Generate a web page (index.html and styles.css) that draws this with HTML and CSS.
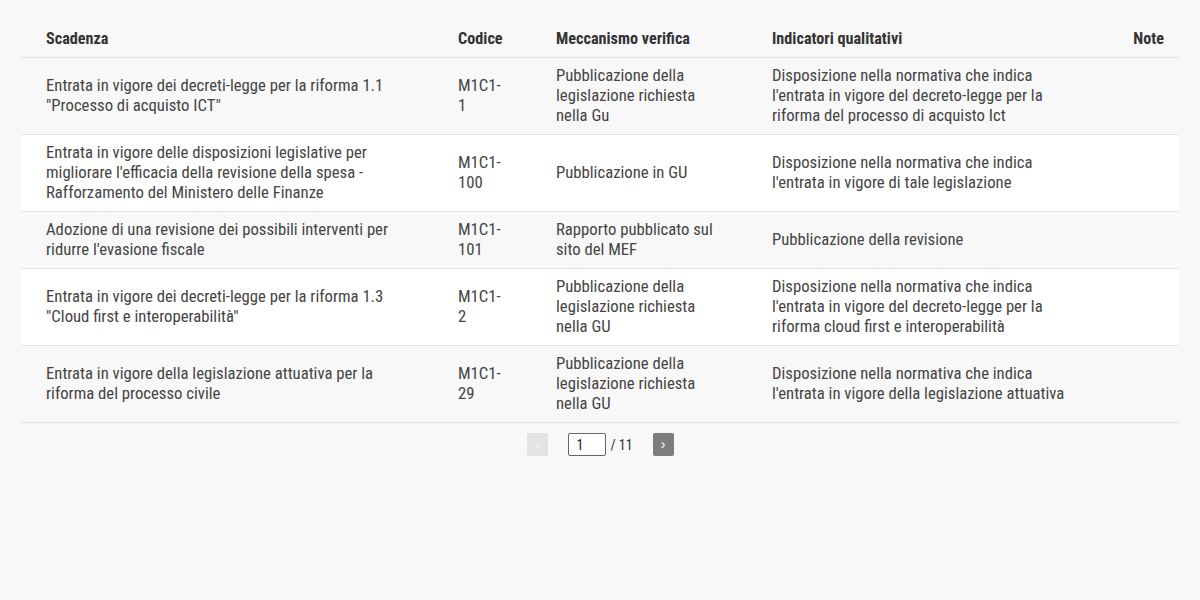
FILE: index.html
```html
<!DOCTYPE html>
<html lang="it">
<head>
<meta charset="utf-8">
<title>Scadenze</title>
<link rel="stylesheet" href="styles.css">
</head>
<body>
<div class="wrap">
  <table class="grid">
    <colgroup>
      <col class="c1"><col class="c2"><col class="c3"><col class="c4"><col class="c5">
    </colgroup>
    <thead>
      <tr>
        <th>Scadenza</th>
        <th>Codice</th>
        <th>Meccanismo verifica</th>
        <th>Indicatori qualitativi</th>
        <th class="note">Note</th>
      </tr>
    </thead>
    <tbody>
      <tr class="odd">
        <td>Entrata in vigore dei decreti-legge per la riforma 1.1 "Processo di acquisto ICT"</td>
        <td>M1C1-1</td>
        <td>Pubblicazione della legislazione richiesta nella Gu</td>
        <td>Disposizione nella normativa che indica l'entrata in vigore del decreto-legge per la riforma del processo di acquisto Ict</td>
        <td class="note"></td>
      </tr>
      <tr>
        <td>Entrata in vigore delle disposizioni legislative per migliorare l'efficacia della revisione della spesa - Rafforzamento del Ministero delle Finanze</td>
        <td>M1C1-100</td>
        <td>Pubblicazione in GU</td>
        <td>Disposizione nella normativa che indica l'entrata in vigore di tale legislazione</td>
        <td class="note"></td>
      </tr>
      <tr class="odd">
        <td>Adozione di una revisione dei possibili interventi per ridurre l'evasione fiscale</td>
        <td>M1C1-101</td>
        <td>Rapporto pubblicato sul sito del MEF</td>
        <td>Pubblicazione della revisione</td>
        <td class="note"></td>
      </tr>
      <tr>
        <td>Entrata in vigore dei decreti-legge per la riforma 1.3 "Cloud first e interoperabilità"</td>
        <td>M1C1-2</td>
        <td>Pubblicazione della legislazione richiesta nella GU</td>
        <td>Disposizione nella normativa che indica l'entrata in vigore del decreto-legge per la riforma cloud first e interoperabilità</td>
        <td class="note"></td>
      </tr>
      <tr class="odd">
        <td>Entrata in vigore della legislazione attuativa per la riforma del processo civile</td>
        <td>M1C1-29</td>
        <td>Pubblicazione della legislazione richiesta nella GU</td>
        <td>Disposizione nella normativa che indica l'entrata in vigore della legislazione attuativa</td>
        <td class="note"></td>
      </tr>
    </tbody>
  </table>
  <div class="pager">
    <button class="pbtn prev" disabled>&#8249;</button>
    <div class="pinfo">
      <input class="pinput" type="text" value="1">
      <span class="ptotal">/ 11</span>
    </div>
    <button class="pbtn next">&#8250;</button>
  </div>
</div>
</body>
</html>
```

FILE: styles.css
```css
html, body {
  margin: 0;
  padding: 0;
  background: #f8f8f8;
}
body {
  font-family: "Roboto Condensed", Roboto, "Liberation Sans", sans-serif;
  font-stretch: condensed;
  font-size: 16.7px;
  color: #444;
}
.wrap {
  padding: 21px 21px 20px;
}
.grid {
  width: 100%;
  table-layout: fixed;
  border-collapse: collapse;
}
.c1 { width: 412px; }
.c2 { width: 98px; }
.c3 { width: 216px; }
.c4 { width: 350px; }
.c5 { width: 82px; }
.grid th,
.grid td {
  padding: 8px 25px;
  line-height: 20px;
  text-align: left;
  vertical-align: middle;
  border-bottom: 1px solid #e0e0e0;
}
.grid th {
  font-size: 16.2px;
  font-weight: 700;
  color: #333;
}
.grid td {
  color: #444;
}
.grid .note {
  text-align: right;
  padding-right: 15px;
}
.grid tbody tr { background: #ffffff; }
.grid tbody tr.odd { background: #f8f8f8; }

.pager {
  display: flex;
  justify-content: center;
  align-items: center;
  gap: 20px;
  margin-top: 10px;
  padding-left: 1px;
}
.pbtn {
  width: 21px;
  height: 23px;
  border: none;
  border-radius: 2px;
  padding: 0;
  font-family: "Liberation Sans", sans-serif;
  font-size: 14px;
  line-height: 23px;
  color: #fff;
  background: #7d7d7d;
}
.pbtn.prev {
  background: #e3e3e3;
  color: #f4f4f4;
}
.pinfo {
  display: flex;
  align-items: center;
  gap: 4px;
}
.pinput {
  width: 38px;
  height: 23px;
  box-sizing: border-box;
  border: 1px solid #666;
  border-radius: 2px;
  padding: 0 7px;
  font-family: "Roboto Condensed", Roboto, sans-serif;
  font-stretch: condensed;
  font-size: 14px;
  color: #222;
  background: #fff;
}
.ptotal {
  font-size: 14px;
  color: #333;
}
```
